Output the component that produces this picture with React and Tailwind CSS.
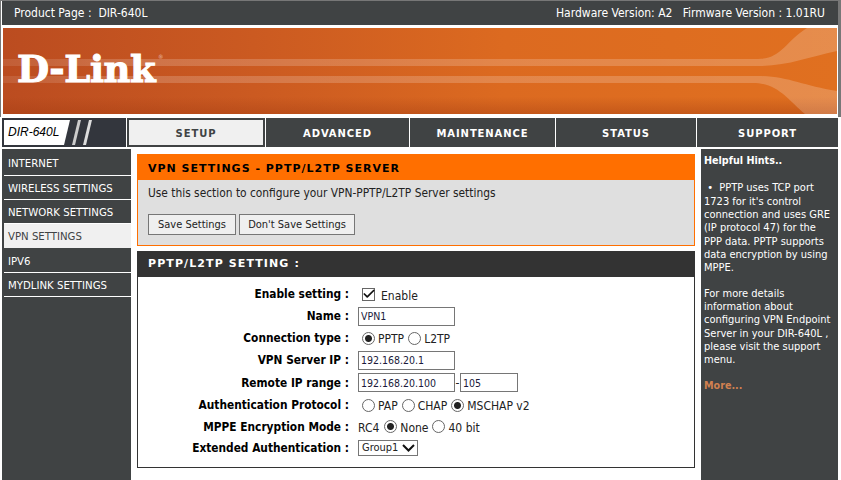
import React from 'react';
import { Check } from 'lucide-react';

const FONT = "font-['DejaVu_Sans_Condensed','DejaVu_Sans',sans-serif] [font-stretch:condensed]";
const WIDE = "font-['DejaVu_Sans',sans-serif] [font-stretch:normal]";

const menuItems = [
  { label: 'INTERNET', cls: 'h-[27px]' },
  { label: 'WIRELESS SETTINGS', cls: 'h-[24px]' },
  { label: 'NETWORK SETTINGS', cls: 'h-[24px]' },
  { label: 'VPN SETTINGS', cls: 'h-[24px]', active: true },
  { label: 'IPV6', cls: 'h-[25px]' },
  { label: 'MYDLINK SETTINGS', cls: 'h-[24px]' },
];

const Radio = ({ checked, label, name }) => (
  <label className="flex items-center">
    <input
      type="radio"
      name={name}
      defaultChecked={checked}
      className="appearance-none w-[13px] h-[13px] rounded-full border border-[#666] bg-white checked:bg-[radial-gradient(circle,#222_3px,#fff_4px)] mr-[3px]"
    />
    <span className="pt-[2px]">{label}</span>
  </label>
);

const TextBox = ({ value, width }) => (
  <input
    type="text"
    defaultValue={value}
    className={`${width} h-[19px] border border-[#767676] bg-white px-[2px] text-[10.5px] text-[#1a1a3a] outline-none`}
  />
);

const Row = ({ label, cls, children }) => (
  <div className={`flex items-center ${cls}`}>
    <div className="w-[211px] pt-[2px] text-right font-bold text-[11.8px] text-black">{label}&nbsp;:</div>
    <div className="ml-[9px] flex items-center gap-[3px] text-[12px] text-[#222]">{children}</div>
  </div>
);

const NavTab = ({ label, width, active }) =>
  active ? (
    <div className={`${width} h-[29px] bg-[#404344] p-[2px]`}>
      <div className="h-full bg-[#f0f0f0] flex items-center justify-center pt-[2px] text-[#404344] font-bold text-[10px] tracking-[0.9px]">
        {label}
      </div>
    </div>
  ) : (
    <div className={`${width} h-[29px] bg-[#404344] flex items-center justify-center pt-[2px] text-white font-bold text-[10px] tracking-[0.9px]`}>
      {label}
    </div>
  );

const Banner = () => (
  <div className="relative h-[86px] ml-[3px] mr-[1px] bg-[linear-gradient(90deg,#bb4c20_0%,#cb5a21_30%,#dc6a20_60%,#e07020_100%)] overflow-hidden">
    <svg className="absolute inset-0" width="834" height="86" viewBox="0 0 834 86">
      <defs>
        <linearGradient id="glow" x1="0" x2="1" y1="0" y2="0">
          <stop offset="0" stopColor="#fff" stopOpacity="0.1" />
          <stop offset="0.15" stopColor="#fff" stopOpacity="0.18" />
          <stop offset="1" stopColor="#fff" stopOpacity="0.2" />
        </linearGradient>
        <linearGradient id="shade" x1="0" x2="0" y1="0" y2="1">
          <stop offset="0.8" stopColor="#a03a10" stopOpacity="0" />
          <stop offset="1" stopColor="#a03a10" stopOpacity="0.4" />
        </linearGradient>
      </defs>
      <rect width="834" height="86" fill="url(#shade)" />
      <path d="M0 31H755C778 31 782 14 804 0H834V23C805 29 785 38 755 38H0Z" fill="url(#glow)" />
      <path d="M0 48H755C785 48 800 58 834 63V86H802C785 72 775 55 750 55H0Z" fill="url(#glow)" />
    </svg>
    <div className="absolute left-[14px] top-[19px] font-['DejaVu_Serif',serif] [font-stretch:normal] font-bold text-white text-[37px] leading-[44px] tracking-[-0.4px] [-webkit-text-stroke:1px_white]">
      D-Link
    </div>
    <div className="absolute left-[155px] top-[25px] text-[6px] leading-[8px] text-white/60">®</div>
  </div>
);

const Logo = () => (
  <div className="relative w-[124px] h-[29px] bg-[#33363d] border-2 border-[#33363d] overflow-hidden">
    <svg className="absolute inset-0" width="120" height="25" viewBox="0 0 120 25">
      <path d="M0 0H66L60 25H0Z" fill="#fff" />
      <path d="M74 0H77L71 25H68Z" fill="#ccc" />
      <path d="M85 0H88L82 25H79Z" fill="#ddd" />
    </svg>
    <div className="absolute left-[4px] top-0 leading-[25px] font-['Liberation_Sans',sans-serif] [font-stretch:normal] italic text-[12px] text-black">
      DIR-640L
    </div>
  </div>
);

export default function App() {
  return (
    <div className={`${FONT} relative w-[841px] h-[480px] overflow-hidden bg-white`}>
      {/* header */}
      <div className="border-t border-l border-r-[3px] border-[#777] h-[117px] pl-[1px]">
        <div className="h-[24px] bg-[#404344] text-white text-[12px] flex items-center justify-between pl-[12px] pr-[13px]">
          <span>Product Page :&nbsp;&nbsp;DIR-640L</span>
          <span>Hardware Version: A2 &nbsp; Firmware Version : 1.01RU</span>
        </div>
        <div className="h-[3px]" />
        <div className="-ml-[2px]">
          <Banner />
        </div>
      </div>

      {/* nav */}
      <div className={`${WIDE} flex gap-[1px] pl-[2px] mt-[1px]`}>
        <Logo />
        <NavTab label="SETUP" width="w-[138px]" active />
        <NavTab label="ADVANCED" width="w-[143px]" />
        <NavTab label="MAINTENANCE" width="w-[145px]" />
        <NavTab label="STATUS" width="w-[140px]" />
        <NavTab label="SUPPORT" width="w-[141px]" />
      </div>

      {/* main */}
      <div className="flex mt-[2px] pl-[2px] h-[331px]">
        <div className="w-[129px] bg-[#404344] pl-[2px] text-[11.3px] text-white">
          {menuItems.map((item) => (
            <div
              key={item.label}
              className={`${item.cls} flex items-center pl-[4px] ${
                item.active ? 'pt-[2px] bg-[#f0f0f0] text-[#404344]' : 'pt-[4px] border-b border-white'
              }`}
            >
              {item.label}
            </div>
          ))}
        </div>

        <div className="w-[558px] ml-[6px] mt-[5px]">
          <div className="border border-[#ff6f00] bg-[#dfdfdf] h-[92px]">
            <div className={`${WIDE} h-[25px] bg-[#ff6f00] flex items-center pt-[3px] pl-[10px] text-black font-bold text-[11px] tracking-[1px]`}>
              VPN SETTINGS - PPTP/L2TP SERVER
            </div>
            <p className="pl-[10px] pt-[5px] text-[11.85px] leading-[16px] text-[#222]">
              Use this section to configure your VPN-PPTP/L2TP Server settings
            </p>
            <div className="flex gap-[3px] pl-[10px] mt-[13px]">
              <button className="h-[21px] w-[88px] pt-[1px] border border-[#767676] bg-[#efefef] text-[11px] text-[#222]">
                Save Settings
              </button>
              <button className="h-[21px] w-[116px] pt-[1px] border border-[#767676] bg-[#efefef] text-[11px] text-[#222]">
                Don't Save Settings
              </button>
            </div>
          </div>

          <div className={`${WIDE} h-[26px] mt-[5px] bg-[#333] flex items-center pt-[1px] pl-[11px] text-white font-bold text-[11px] tracking-[1.1px]`}>
            PPTP/L2TP SETTING :
          </div>
          <div className="border border-t-0 border-[#333] h-[191px] pt-[6px]">
            <Row label="Enable setting" cls="h-[22px]">
              <span className="relative w-[13px] h-[13px] border border-[#666] bg-white mr-[3px] ml-[4px]">
                <Check className="absolute -left-[1px] -top-[2px] w-[14px] h-[14px] text-[#111]" strokeWidth={3} />
              </span>
              <span className="pt-[3px]">Enable</span>
            </Row>
            <Row label="Name" cls="h-[22px]">
              <TextBox value="VPN1" width="w-[97px]" />
            </Row>
            <Row label="Connection type" cls="h-[22px]">
              <div className="flex gap-[4px] ml-[4px]">
                <Radio name="conn" checked label="PPTP" />
                <Radio name="conn" label="L2TP" />
              </div>
            </Row>
            <Row label="VPN Server IP" cls="h-[22px]">
              <TextBox value="192.168.20.1" width="w-[97px]" />
            </Row>
            <Row label="Remote IP range" cls="h-[23px]">
              <div className="flex items-center gap-[0.5px]">
                <TextBox value="192.168.20.100" width="w-[97px]" />
                <span>-</span>
                <TextBox value="105" width="w-[58px]" />
              </div>
            </Row>
            <Row label="Authentication Protocol" cls="h-[22px]">
              <div className="flex gap-[4px] ml-[4px]">
                <Radio name="auth" label="PAP" />
                <Radio name="auth" label="CHAP" />
                <Radio name="auth" checked label="MSCHAP v2" />
              </div>
            </Row>
            <Row label="MPPE Encryption Mode" cls="h-[21px]">
              <div className="flex gap-[4px]">
                <span className="pt-[2px] mr-[1px]">RC4</span>
                <Radio name="mppe" checked label="None" />
                <Radio name="mppe" label="40 bit" />
              </div>
            </Row>
            <Row label="Extended Authentication" cls="h-[21px]">
              <div className="relative w-[60px] h-[16px] border border-[#767676] bg-white flex items-center pl-[3px] pt-[1px] text-[11px] text-[#222]">
                Group1
                <svg className="absolute right-[2px] top-[3px]" width="13" height="8" viewBox="0 0 13 8" fill="none" stroke="#111" strokeWidth="2">
                  <polyline points="1,1 6.5,6.5 12,1" />
                </svg>
              </div>
            </Row>
          </div>
        </div>

        <div className="w-[137px] ml-[6px] bg-[#404344] text-white text-[11px] leading-[13.33px] pl-[3px] pr-[2px] pt-[5px]">
          <div className="font-bold text-[10.7px]">Helpful Hints..</div>
          <p className="mt-[14px]">
            &nbsp;• &nbsp;PPTP uses TCP port<br />
            1723 for it's control<br />
            connection and uses GRE<br />
            (IP protocol 47) for the<br />
            PPP data. PPTP supports<br />
            data encryption by using<br />
            MPPE.
          </p>
          <p className="mt-[12px]">
            For more details<br />
            information about<br />
            configuring VPN Endpoint<br />
            Server in your DIR-640L ,<br />
            please visit the support<br />
            menu.
          </p>
          <p className="mt-[12px] font-bold text-[10.7px] text-[#d08050]">More...</p>
        </div>
      </div>
    </div>
  );
}
